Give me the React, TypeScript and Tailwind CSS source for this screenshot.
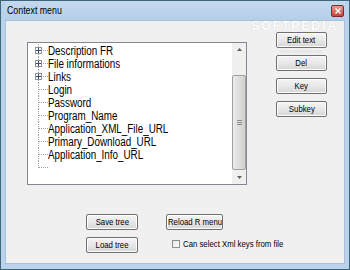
import React from "react";

const items = [
  { label: "Description FR", folder: true },
  { label: "File informations", folder: true },
  { label: "Links", folder: true },
  { label: "Login" },
  { label: "Password" },
  { label: "Program_Name" },
  { label: "Application_XML_File_URL" },
  { label: "Primary_Download_URL" },
  { label: "Application_Info_URL" },
  { label: "", last: true },
];

function WinButton({ label, className = "" }: { label: string; className?: string }) {
  return (
    <button
      className={
        "flex h-[16px] items-center justify-center rounded-[2px] border border-[#707070] bg-gradient-to-b from-[#f4f4f4] via-[#e8e8e8] to-[#d6d6d6] px-0 shadow-[inset_0_0_0_1px_#fbfbfb] " +
        className
      }
    >
      <span className="inline-block scale-x-[0.82] whitespace-nowrap text-[9.5px] leading-none text-black">{label}</span>
    </button>
  );
}

function TreeRow({ label, folder, last }: { label: string; folder?: boolean; last?: boolean }) {
  return (
    <div className="flex h-[13px] items-center">
      <div className="relative h-[13px] w-[19px] shrink-0">
        <div
          className={
            "absolute left-[9px] w-px border-l border-dotted border-[#a0a0a0] " +
            (last ? "top-0 h-[7px]" : "top-0 h-[13px]")
          }
        />
        <div className="absolute left-[10px] top-[6px] h-px w-[9px] border-t border-dotted border-[#a0a0a0]" />
        {folder && (
          <div className="absolute left-[6px] top-[3px] flex h-[7px] w-[7px] items-center justify-center border border-[#919191] bg-white">
            <svg width="5" height="5" viewBox="0 0 5 5">
              <path d="M0 2.5H5M2.5 0V5" stroke="#2c4a8c" strokeWidth="1" />
            </svg>
          </div>
        )}
      </div>
      <span className="inline-block origin-left scale-x-[0.82] whitespace-nowrap text-[12px] leading-none text-black">{label}</span>
    </div>
  );
}

export default function App() {
  return (
    <div
      className="flex h-[270px] w-[350px] flex-col border border-[#3f6579] bg-[#b9d3ec] px-[4px] pb-[5px]"
      style={{ fontFamily: '"Liberation Sans", Arial, sans-serif' }}
    >
      <div className="flex h-[19px] shrink-0 items-center justify-between bg-gradient-to-b from-[#c3d9ef] to-[#b5cfe8] pl-[2px] pr-[1px]">
        <span className="inline-block origin-left scale-x-[0.8] whitespace-nowrap text-[11px] leading-none text-black">Context menu</span>
        <div className="flex h-[12px] w-[13px] items-center justify-center rounded-[2px] border border-[#7a2c2c] bg-gradient-to-b from-[#e29b8e] to-[#c3443a]">
          <svg width="6" height="6" viewBox="0 0 6 6">
            <path d="M0.5 0.5L5.5 5.5M5.5 0.5L0.5 5.5" stroke="#fff" strokeWidth="1.4" />
          </svg>
        </div>
      </div>

      <div className="relative flex flex-1 flex-col border border-[#a7c1da] bg-[#f0f0f0]">
        <div className="pointer-events-none absolute right-[6px] top-[-1px] leading-[10px]">
          <span className="text-[12px] font-bold leading-[10px] tracking-[2px] text-white [text-shadow:0_0_1px_#bdbdbd]">SOFTPEDIA</span>
        </div>

        <div className="flex pl-[21px] pt-[11px]">
          <div className="mt-[10px] flex h-[143px] w-[220px] border border-[#828790] bg-white">
            <div className="flex-1 overflow-hidden pl-[1px] pt-[1px]">
              {items.map((it, i) => (
                <TreeRow key={i} label={it.label} folder={it.folder} last={it.last} />
              ))}
            </div>
            <div className="flex w-[14px] flex-col bg-[#f0f0f0]">
              <div className="flex h-[14px] items-center justify-center">
                <svg width="5" height="3" viewBox="0 0 5 3">
                  <path d="M0 3L2.5 0L5 3Z" fill="#606060" />
                </svg>
              </div>
              <div className="mt-[18px] flex h-[97px] items-center justify-center rounded-[2px] border border-[#a0a0a0] bg-gradient-to-r from-[#ececec] via-[#dedede] to-[#d0d0d0]">
                <svg width="5" height="5" viewBox="0 0 5 5">
                  <path d="M0 0.5H5M0 2.5H5M0 4.5H5" stroke="#8c8c8c" strokeWidth="1" />
                </svg>
              </div>
              <div className="mt-auto flex h-[14px] items-center justify-center">
                <svg width="5" height="3" viewBox="0 0 5 3">
                  <path d="M0 0L2.5 3L5 0Z" fill="#606060" />
                </svg>
              </div>
            </div>
          </div>

          <div className="ml-[29px] flex flex-col">
            <WinButton label="Edit text" className="w-[51px]" />
            <span className="h-[7px] text-center text-[5px] leading-[7px] text-[#dcdcdc]">www.softpedia.com</span>
            <div className="flex flex-col gap-[7px]">
              <WinButton label="Del" className="w-[51px]" />
              <WinButton label="Key" className="w-[51px]" />
              <WinButton label="Subkey" className="w-[51px]" />
            </div>
          </div>
        </div>

        <div className="mt-[29px] flex pl-[80px]">
          <div className="flex flex-col gap-[7px]">
            <WinButton label="Save tree" className="w-[52px]" />
            <WinButton label="Load tree" className="w-[52px]" />
          </div>
          <div className="ml-[28px] flex flex-col">
            <WinButton label="Reload R menu" className="w-[57px]" />
            <div className="ml-[6px] mt-[9px] flex items-center gap-[3px]">
              <div className="h-[8px] w-[8px] shrink-0 border border-[#8e8f8f] bg-gradient-to-br from-[#e6e6e6] to-[#fbfbfb]" />
              <span className="inline-block origin-left scale-x-[0.82] whitespace-nowrap text-[9.5px] leading-none text-black">Can select Xml keys from file</span>
            </div>
          </div>
        </div>
      </div>
    </div>
  );
}
